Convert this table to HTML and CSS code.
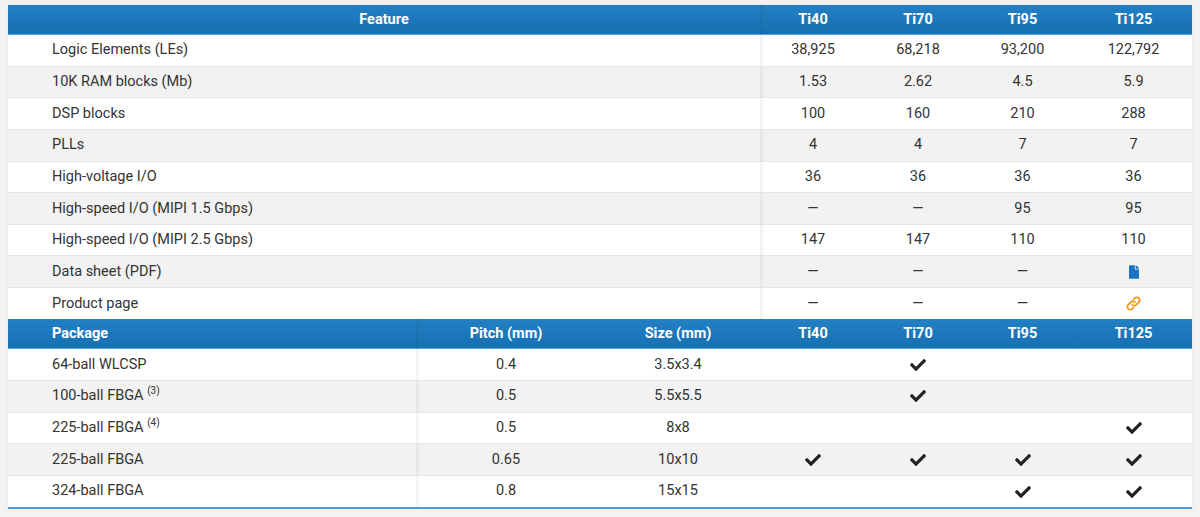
FILE: index.html
```html
<!DOCTYPE html>
<html lang="en">
<head>
<meta charset="utf-8">
<title>Titanium FPGA comparison</title>
<link rel="stylesheet" href="styles.css">
</head>
<body>
<div class="page">
  <div class="table-wrap">
    <table class="spec">
      <colgroup>
        <col class="c-pkg"><col class="c-pitch"><col class="c-size">
        <col class="c-ti40"><col class="c-ti70"><col class="c-ti95"><col class="c-ti125">
      </colgroup>
      <thead>
        <tr class="head">
          <th colspan="3" class="center sticky">Feature</th>
          <th class="after">Ti40</th><th>Ti70</th><th>Ti95</th><th>Ti125</th>
        </tr>
      </thead>
      <tbody>
        <tr><td colspan="3" class="label sticky">Logic Elements (LEs)</td><td class="after">38,925</td><td>68,218</td><td>93,200</td><td>122,792</td></tr>
        <tr class="alt"><td colspan="3" class="label sticky">10K RAM blocks (Mb)</td><td class="after">1.53</td><td>2.62</td><td>4.5</td><td>5.9</td></tr>
        <tr><td colspan="3" class="label sticky">DSP blocks</td><td class="after">100</td><td>160</td><td>210</td><td>288</td></tr>
        <tr class="alt"><td colspan="3" class="label sticky">PLLs</td><td class="after">4</td><td>4</td><td>7</td><td>7</td></tr>
        <tr><td colspan="3" class="label sticky">High-voltage I/O</td><td class="after">36</td><td>36</td><td>36</td><td>36</td></tr>
        <tr class="alt"><td colspan="3" class="label sticky">High-speed I/O (MIPI 1.5 Gbps)</td><td class="after">—</td><td>—</td><td>95</td><td>95</td></tr>
        <tr><td colspan="3" class="label sticky">High-speed I/O (MIPI 2.5 Gbps)</td><td class="after">147</td><td>147</td><td>110</td><td>110</td></tr>
        <tr class="alt"><td colspan="3" class="label sticky">Data sheet (PDF)</td><td class="after">—</td><td>—</td><td>—</td>
          <td><svg class="ico-file" viewBox="0 0 384 512" aria-label="PDF"><path d="M224 136V0H24C10.7 0 0 10.7 0 24v464c0 13.3 10.7 24 24 24h336c13.3 0 24-10.7 24-24V160H248c-13.2 0-24-10.8-24-24zm160-14.1v6.1H256V0h6.1c6.4 0 12.5 2.5 17 7l97.9 98c4.5 4.5 7 10.6 7 16.9z"/></svg></td></tr>
        <tr><td colspan="3" class="label sticky">Product page</td><td class="after">—</td><td>—</td><td>—</td>
          <td><svg class="ico-link" viewBox="0 0 24 24" aria-label="link"><path d="M10.2 13.8a3.6 3.6 0 0 0 5.1 0l3.4-3.4a3.6 3.6 0 0 0-5.1-5.1l-1.3 1.3M13.8 10.2a3.6 3.6 0 0 0-5.1 0l-3.4 3.4a3.6 3.6 0 0 0 5.1 5.1l1.3-1.3"/></svg></td></tr>
      </tbody>
      <thead>
        <tr class="head">
          <th class="left sticky">Package</th>
          <th class="after">Pitch (mm)</th><th>Size (mm)</th>
          <th>Ti40</th><th>Ti70</th><th>Ti95</th><th>Ti125</th>
        </tr>
      </thead>
      <tbody>
        <tr><td class="label sticky">64-ball WLCSP</td><td class="after">0.4</td><td>3.5x3.4</td><td></td><td><svg class="ico-check" viewBox="0 0 512 512"><path d="M173.9 439.4l-166.4-166.4c-10-10-10-26.2 0-36.2l36.2-36.2c10-10 26.2-10 36.2 0L192 312.7 432.1 72.6c10-10 26.2-10 36.2 0l36.2 36.2c10 10 10 26.2 0 36.2l-294.4 294.4c-10 10-26.2 10-36.2 0z"/></svg></td><td></td><td></td></tr>
        <tr class="alt"><td class="label sticky">100-ball FBGA <sup>(3)</sup></td><td class="after">0.5</td><td>5.5x5.5</td><td></td><td><svg class="ico-check" viewBox="0 0 512 512"><path d="M173.9 439.4l-166.4-166.4c-10-10-10-26.2 0-36.2l36.2-36.2c10-10 26.2-10 36.2 0L192 312.7 432.1 72.6c10-10 26.2-10 36.2 0l36.2 36.2c10 10 10 26.2 0 36.2l-294.4 294.4c-10 10-26.2 10-36.2 0z"/></svg></td><td></td><td></td></tr>
        <tr><td class="label sticky">225-ball FBGA <sup>(4)</sup></td><td class="after">0.5</td><td>8x8</td><td></td><td></td><td></td><td><svg class="ico-check" viewBox="0 0 512 512"><path d="M173.9 439.4l-166.4-166.4c-10-10-10-26.2 0-36.2l36.2-36.2c10-10 26.2-10 36.2 0L192 312.7 432.1 72.6c10-10 26.2-10 36.2 0l36.2 36.2c10 10 10 26.2 0 36.2l-294.4 294.4c-10 10-26.2 10-36.2 0z"/></svg></td></tr>
        <tr class="alt"><td class="label sticky">225-ball FBGA</td><td class="after">0.65</td><td>10x10</td>
          <td><svg class="ico-check" viewBox="0 0 512 512"><path d="M173.9 439.4l-166.4-166.4c-10-10-10-26.2 0-36.2l36.2-36.2c10-10 26.2-10 36.2 0L192 312.7 432.1 72.6c10-10 26.2-10 36.2 0l36.2 36.2c10 10 10 26.2 0 36.2l-294.4 294.4c-10 10-26.2 10-36.2 0z"/></svg></td>
          <td><svg class="ico-check" viewBox="0 0 512 512"><path d="M173.9 439.4l-166.4-166.4c-10-10-10-26.2 0-36.2l36.2-36.2c10-10 26.2-10 36.2 0L192 312.7 432.1 72.6c10-10 26.2-10 36.2 0l36.2 36.2c10 10 10 26.2 0 36.2l-294.4 294.4c-10 10-26.2 10-36.2 0z"/></svg></td>
          <td><svg class="ico-check" viewBox="0 0 512 512"><path d="M173.9 439.4l-166.4-166.4c-10-10-10-26.2 0-36.2l36.2-36.2c10-10 26.2-10 36.2 0L192 312.7 432.1 72.6c10-10 26.2-10 36.2 0l36.2 36.2c10 10 10 26.2 0 36.2l-294.4 294.4c-10 10-26.2 10-36.2 0z"/></svg></td>
          <td><svg class="ico-check" viewBox="0 0 512 512"><path d="M173.9 439.4l-166.4-166.4c-10-10-10-26.2 0-36.2l36.2-36.2c10-10 26.2-10 36.2 0L192 312.7 432.1 72.6c10-10 26.2-10 36.2 0l36.2 36.2c10 10 10 26.2 0 36.2l-294.4 294.4c-10 10-26.2 10-36.2 0z"/></svg></td></tr>
        <tr class="last"><td class="label sticky">324-ball FBGA</td><td class="after">0.8</td><td>15x15</td><td></td><td></td>
          <td><svg class="ico-check" viewBox="0 0 512 512"><path d="M173.9 439.4l-166.4-166.4c-10-10-10-26.2 0-36.2l36.2-36.2c10-10 26.2-10 36.2 0L192 312.7 432.1 72.6c10-10 26.2-10 36.2 0l36.2 36.2c10 10 10 26.2 0 36.2l-294.4 294.4c-10 10-26.2 10-36.2 0z"/></svg></td>
          <td><svg class="ico-check" viewBox="0 0 512 512"><path d="M173.9 439.4l-166.4-166.4c-10-10-10-26.2 0-36.2l36.2-36.2c10-10 26.2-10 36.2 0L192 312.7 432.1 72.6c10-10 26.2-10 36.2 0l36.2 36.2c10 10 10 26.2 0 36.2l-294.4 294.4c-10 10-26.2 10-36.2 0z"/></svg></td></tr>
      </tbody>
    </table>
  </div>
</div>
</body>
</html>
```

FILE: styles.css
```css
html, body {
  margin: 0;
  padding: 0;
  background: #f3f3f3;
}
.page {
  padding: 5px 8px 0 8px;
  font-family: Roboto, "Liberation Sans", Arial, sans-serif;
  color: #333;
}
.table-wrap {
  width: 1184px;
  background: #fff;
  box-shadow: 0 0 3px rgba(0, 0, 0, 0.08);
  border-bottom: 2px solid #4a9bd5;
}
.spec {
  width: 1184px;
  border-collapse: collapse;
  table-layout: fixed;
  font-size: 14.5px;
}
.c-pkg { width: 408px; }
.c-pitch { width: 180px; }
.c-size { width: 164px; }
.c-ti40 { width: 106px; }
.c-ti70 { width: 104px; }
.c-ti95 { width: 105px; }
.c-ti125 { width: 117px; }

.head th {
  height: 29px;
  padding: 0 10px;
  background: linear-gradient(#2380c4, #1670b2);
  color: #fff;
  font-weight: 700;
  font-size: 14.5px;
  text-align: center;
  border-bottom: 1px solid #4ea5e0;
}
.head th.left {
  text-align: left;
  padding-left: 44px;
}
.head th.after {
  background: linear-gradient(to right, rgba(0, 0, 0, 0.07), rgba(0, 0, 0, 0) 5px), linear-gradient(#2380c4, #1670b2);
}
.spec td {
  height: 31.65px;
  padding: 0 10px;
  box-sizing: border-box;
  text-align: center;
  vertical-align: middle;
  border-top: 1px solid #e6e6e6;
  line-height: 18px;
}
.spec tbody tr:first-child td {
  border-top: none;
}
.spec td.label {
  text-align: left;
  padding-left: 44px;
}
.spec tr td { background: #fff; }
.spec tr.alt td { background: #f2f2f2; }
.spec tr td.after {
  background: linear-gradient(to right, rgba(0, 0, 0, 0.06), rgba(0, 0, 0, 0) 5px), #fff;
}
.spec tr.alt td.after {
  background: linear-gradient(to right, rgba(0, 0, 0, 0.06), rgba(0, 0, 0, 0) 5px), #f2f2f2;
}
sup {
  font-size: 10px;
  line-height: 0;
  vertical-align: 6px;
}
.ico-check {
  width: 16px;
  height: 16px;
  fill: #222;
  vertical-align: middle;
}
.ico-file {
  width: 10px;
  height: 14px;
  fill: #1a73c0;
  vertical-align: middle;
}
.ico-link {
  width: 19px;
  height: 19px;
  fill: none;
  stroke: #f39a1e;
  stroke-width: 2.3;
  stroke-linecap: round;
  vertical-align: middle;
}
```
